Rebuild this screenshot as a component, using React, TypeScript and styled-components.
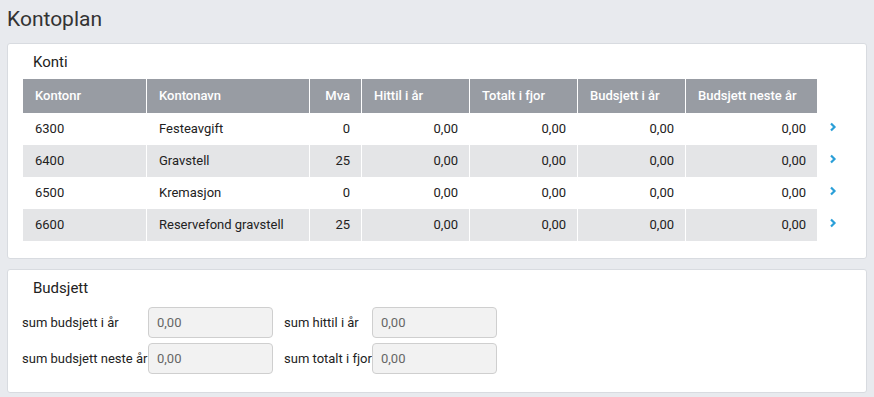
import React from 'react';
import styled, { createGlobalStyle } from 'styled-components';

const GlobalStyle = createGlobalStyle`
  body {
    margin: 0;
    background: #e8eaee;
    font-family: Roboto, "Liberation Sans", sans-serif;
    color: #222;
  }
`;

const Page = styled.div`
  padding: 4px 7px 0 7px;
  width: 860px;
`;

const Title = styled.h1`
  margin: 0 0 9px 0;
  font-size: 21px;
  font-weight: 400;
  color: #333;
  line-height: 30px;
`;

const Card = styled.div`
  background: #fff;
  border: 1px solid #d8dbe0;
  border-radius: 3px;
  margin-bottom: 10px;
`;

const CardTitle = styled.div`
  font-size: 15px;
  padding: 0 0 0 10px;
  line-height: 20px;
`;

const KontiCard = styled(Card)`
  padding: 8px 0 14px 15px;
  height: 192px;
`;

const TableRow = styled.div`
  display: flex;
  align-items: center;
`;

const Table = styled.div`
  margin-top: 7px;
`;

const widths = [124, 163, 52, 108, 108, 108, 131];

const HeadCell = styled.div<{ w: number; right?: boolean; last?: boolean }>`
  width: ${(p) => p.w}px;
  flex-shrink: 0;
  box-sizing: border-box;
  background: #989ca3;
  color: #fff;
  font-weight: 500;
  font-size: 13px;
  height: 34px;
  line-height: 34px;
  padding: 0 11px 0 12px;
  border-right: ${(p) => (p.last ? 'none' : '1px solid #fff')};
  text-align: ${(p) => (p.right ? 'right' : 'left')};
  white-space: nowrap;
`;

const Cell = styled.div<{ w: number; right?: boolean; last?: boolean; shaded?: boolean }>`
  width: ${(p) => p.w}px;
  flex-shrink: 0;
  box-sizing: border-box;
  background: ${(p) => (p.shaded ? '#e4e5e7' : '#fff')};
  font-size: 13px;
  height: 32px;
  line-height: 32px;
  padding: 0 11px 0 12px;
  border-right: ${(p) => (p.last ? 'none' : '1px solid #fff')};
  text-align: ${(p) => (p.right ? 'right' : 'left')};
  white-space: nowrap;
`;

const Chevron = styled.span`
  margin-left: 12px;
  color: #2a9fd8;
  display: inline-flex;
  margin-top: -4px;
`;

const BudsjettCard = styled(Card)`
  padding: 8px 0 18px 15px;
`;

const FormGrid = styled.div`
  display: grid;
  grid-template-columns: 126px 125px 11px 88px 125px;
  row-gap: 5px;
  margin-top: 9px;
  margin-left: -1px;
  align-items: center;
`;

const Label = styled.label<{ col: number }>`
  font-size: 13px;
  white-space: nowrap;
  grid-column: ${(p) => p.col};
`;

const Input = styled.div<{ col: number }>`
  grid-column: ${(p) => p.col};
  height: 31px;
  box-sizing: border-box;
  background: #f2f2f2;
  border: 1px solid #cfcfcf;
  border-radius: 4px;
  font-size: 13px;
  color: #666;
  line-height: 29px;
  padding: 0 8px;
`;

const rows = [
  ['6300', 'Festeavgift', '0'],
  ['6400', 'Gravstell', '25'],
  ['6500', 'Kremasjon', '0'],
  ['6600', 'Reservefond gravstell', '25'],
];

const heads = ['Kontonr', 'Kontonavn', 'Mva', 'Hittil i år', 'Totalt i fjor', 'Budsjett i år', 'Budsjett neste år'];

const ChevronIcon = () => (
  <svg width="8" height="10" viewBox="0 0 8 10">
    <path d="M2 1.5 L5.5 5 L2 8.5" fill="none" stroke="currentColor" strokeWidth="2.2" />
  </svg>
);

export default function App() {
  return (
    <Page>
      <GlobalStyle />
      <Title>Kontoplan</Title>
      <KontiCard>
        <CardTitle>Konti</CardTitle>
        <Table>
          <TableRow>
            {heads.map((h, i) => (
              <HeadCell key={h} w={widths[i]} right={i === 2} last={i === 6}>
                {h}
              </HeadCell>
            ))}
          </TableRow>
          {rows.map((r, ri) => {
            const vals = [r[0], r[1], r[2], '0,00', '0,00', '0,00', '0,00'];
            return (
              <TableRow key={r[0]}>
                {vals.map((v, i) => (
                  <Cell key={i} w={widths[i]} right={i >= 2} last={i === 6} shaded={ri % 2 === 1}>
                    {v}
                  </Cell>
                ))}
                <Chevron>
                  <ChevronIcon />
                </Chevron>
              </TableRow>
            );
          })}
        </Table>
      </KontiCard>
      <BudsjettCard>
        <CardTitle>Budsjett</CardTitle>
        <FormGrid>
          <Label col={1}>sum budsjett i år</Label>
          <Input col={2}>0,00</Input>
          <Label col={4}>sum hittil i år</Label>
          <Input col={5}>0,00</Input>
          <Label col={1}>sum budsjett neste år</Label>
          <Input col={2}>0,00</Input>
          <Label col={4}>sum totalt i fjor</Label>
          <Input col={5}>0,00</Input>
        </FormGrid>
      </BudsjettCard>
    </Page>
  );
}
